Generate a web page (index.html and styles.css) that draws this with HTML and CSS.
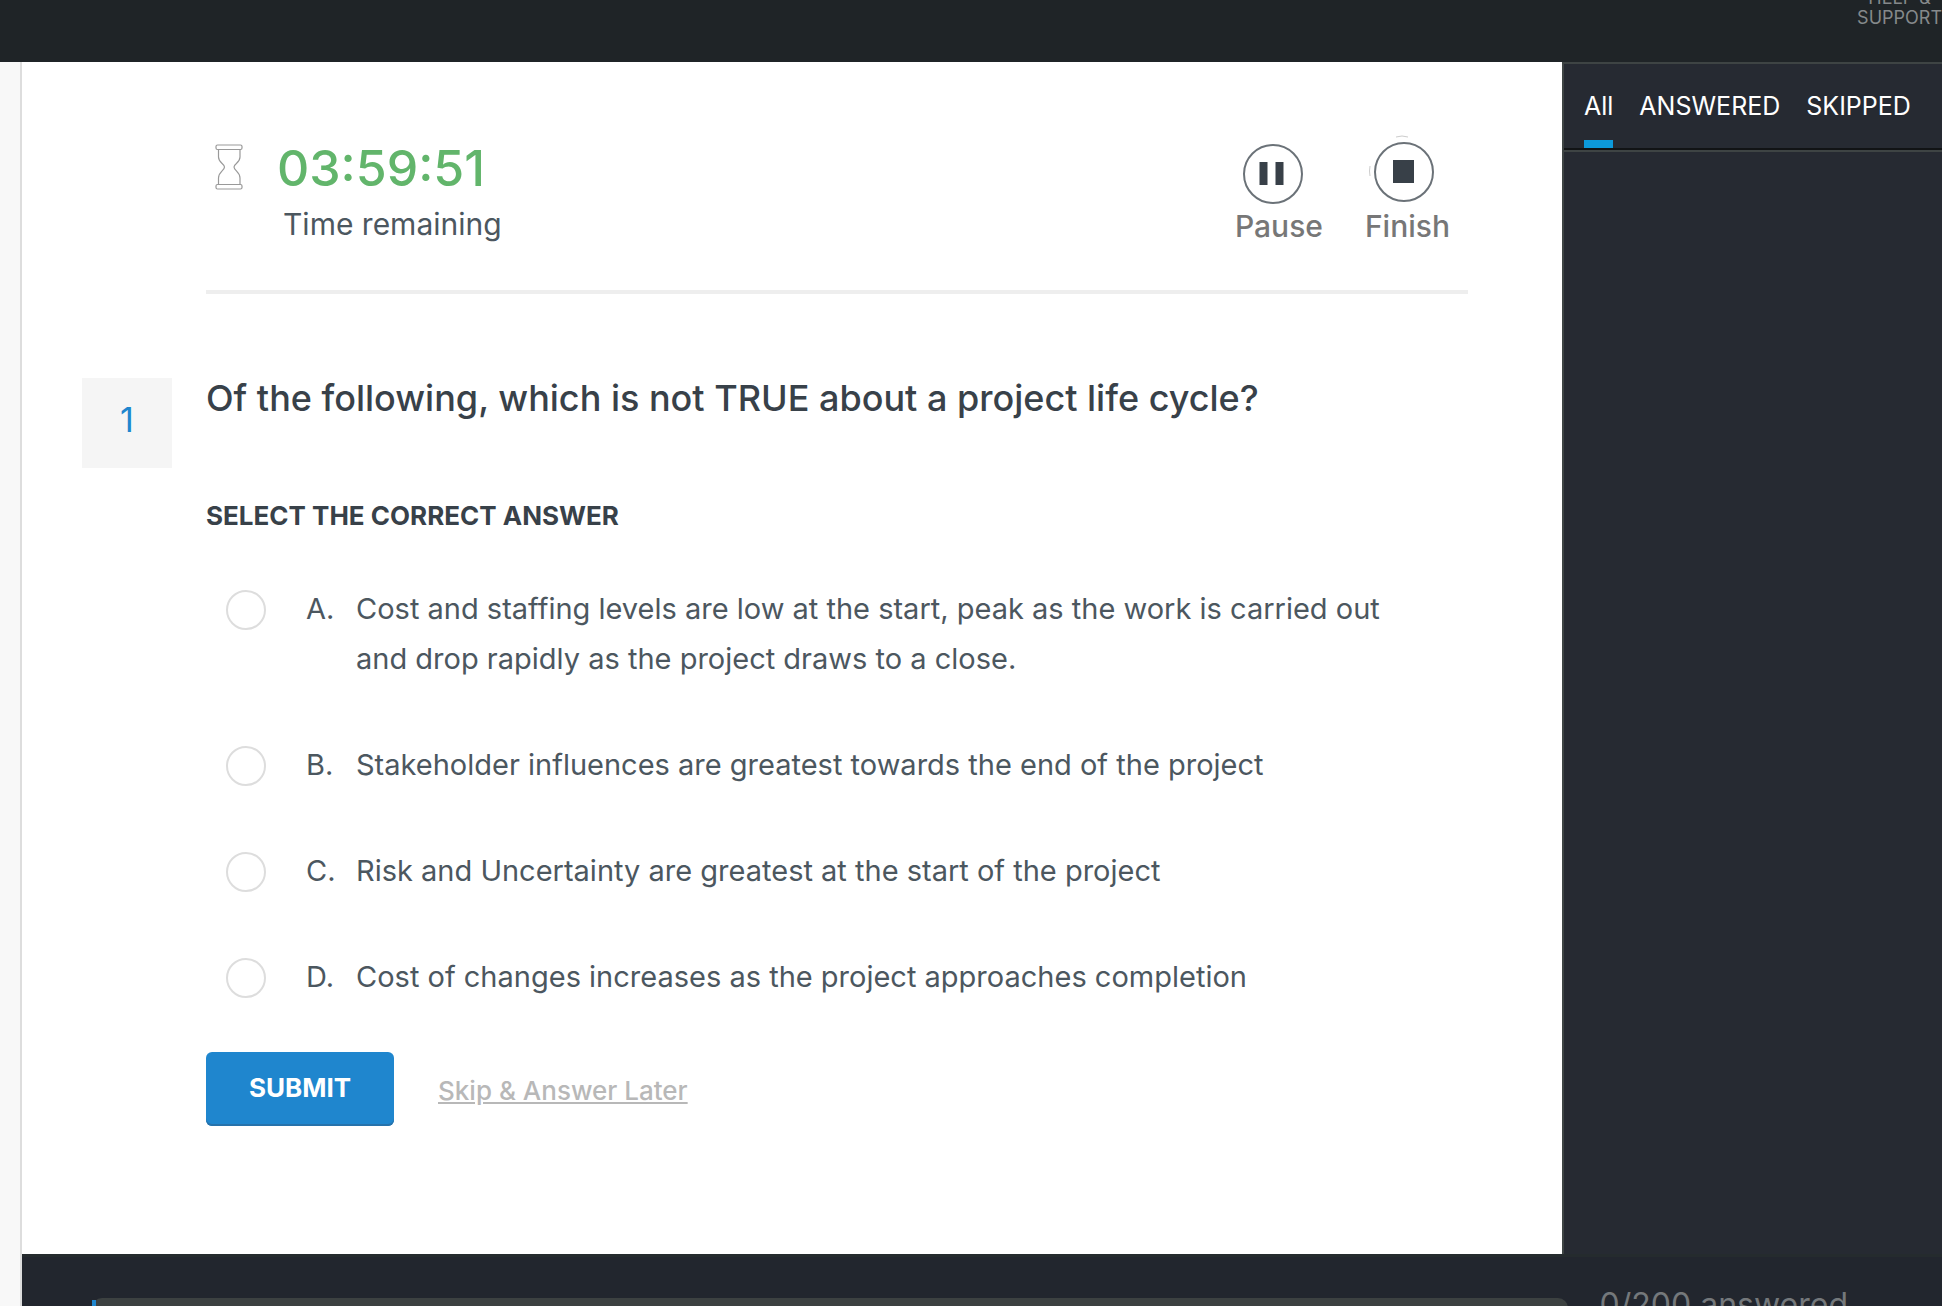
FILE: index.html
```html
<!DOCTYPE html>
<html lang="en">
<head>
    <meta charset="UTF-8">
    <meta name="viewport" content="width=device-width, initial-scale=1.0">
    <title>Practice Exam</title>
    <link rel="stylesheet" href="styles.css">
</head>
<body>
    <header class="top-bar">
        <a href="#" class="help-link">HELP &amp;<br>SUPPORT</a>
    </header>

    <div class="page">
        <div class="gutter"></div>

        <div class="exam">
            <div class="exam-body">
                <main class="question-panel">
                    <div class="exam-header">
                        <div class="timer">
                            <svg class="hourglass" width="28" height="46" viewBox="0 0 28 46" fill="none" stroke="#999" stroke-width="1.2">
                                <rect x="1" y="1" width="26" height="4.5" rx="1.5"/>
                                <rect x="1" y="40.5" width="26" height="4.5" rx="1.5"/>
                                <path d="M3.5 5.5V13C3.5 19 9.5 19.5 9.5 23C9.5 26.5 3.5 28 3.5 34V40.5M25 5.5V13C25 19 19 19.5 19 23C19 26.5 25 28 25 34V40.5"/>
                            </svg>
                            <div>
                                <div class="time">03:59:51</div>
                                <div class="time-label">Time remaining</div>
                            </div>
                        </div>
                        <div class="exam-controls">
                            <button type="button" class="control">
                                <svg width="76" height="76" viewBox="0 0 76 76">
                                    <circle cx="32" cy="40" r="29" fill="none" stroke="#6b7278" stroke-width="2"/>
                                    <path d="M18.5 28h8v23h-8zM34.5 28h8v23h-8z" fill="#384048"/>
                                </svg>
                                Pause
                            </button>
                            <button type="button" class="control">
                                <svg width="76" height="76" viewBox="0 0 76 76">
                                    <circle cx="35" cy="38" r="29" fill="none" stroke="#6b7278" stroke-width="2"/>
                                    <path d="M24 26h21v23H24z" fill="#384048"/>
                                    <path d="M27 3Q33 1 39 3M1 32Q0 37 1 42" fill="none" stroke="#ccc"/>
                                </svg>
                                Finish
                            </button>
                        </div>
                    </div>

                    <form class="question">
                        <div class="question-number">1</div>
                        <div class="question-content">
                            <h1 class="question-text">Of the following, which is not TRUE about a project life cycle?</h1>
                            <h2 class="instruction">SELECT THE CORRECT ANSWER</h2>
                            <div class="answers">
                                <label class="answer">
                                    <input type="radio" name="answer" value="A">
                                    <span class="letter">A.</span>
                                    <span>Cost and staffing levels are low at the start, peak as the work is carried out and drop rapidly as the project draws to a close.</span>
                                </label>
                                <label class="answer">
                                    <input type="radio" name="answer" value="B">
                                    <span class="letter">B.</span>
                                    <span>Stakeholder influences are greatest towards the end of the project</span>
                                </label>
                                <label class="answer">
                                    <input type="radio" name="answer" value="C">
                                    <span class="letter">C.</span>
                                    <span>Risk and Uncertainty are greatest at the start of the project</span>
                                </label>
                                <label class="answer">
                                    <input type="radio" name="answer" value="D">
                                    <span class="letter">D.</span>
                                    <span>Cost of changes increases as the project approaches completion</span>
                                </label>
                            </div>
                            <div class="actions">
                                <button type="submit" class="submit">SUBMIT</button>
                                <a href="#" class="skip">Skip &amp; Answer Later</a>
                            </div>
                        </div>
                    </form>
                </main>

                <aside class="sidebar">
                    <nav class="tabs">
                        <a href="#" class="tab active">All</a>
                        <a href="#" class="tab">ANSWERED</a>
                        <a href="#" class="tab">SKIPPED</a>
                    </nav>
                </aside>
            </div>

            <footer class="status-bar">
                <div class="progress"><div class="progress-fill"></div></div>
                <div class="progress-text">0/200 answered</div>
            </footer>
        </div>
    </div>
</body>
</html>
```

FILE: styles.css
```css
* {
    box-sizing: border-box;
}
body {
    display: flex;
    flex-direction: column;
    height: 100vh;
    margin: 0;
    overflow: hidden;
    background-color: #fff;
    color: #4c575f;
    font-family: Inter, "Noto Sans", sans-serif;
    font-size: 29px;
}
button {
    font-family: inherit;
    cursor: pointer;
}

/* top bar */
.top-bar {
    display: flex;
    justify-content: flex-end;
    align-items: flex-end;
    flex: none;
    height: 62px;
    padding-bottom: 34px;
    overflow: hidden;
    background-color: #1f2427;
}
.help-link {
    color: #85898b;
    font-size: 18px;
    line-height: 20px;
    text-align: center;
    text-decoration: none;
}

/* page columns */
.page {
    display: flex;
    flex: 1;
    min-height: 0;
}
.gutter {
    flex: none;
    width: 22px;
    background-color: #f8f8f8;
    border-right: 2px solid #ddd;
}
.exam {
    display: flex;
    flex-direction: column;
    flex: 1;
}
.exam-body {
    display: flex;
    flex: 1;
    min-height: 0;
}
.question-panel {
    flex: 1;
    padding: 72px 94px 0 60px;
}

/* timer and controls */
.exam-header {
    display: flex;
    justify-content: space-between;
    height: 160px;
    margin-left: 124px;
    border-bottom: 4px solid #eee;
}
.timer {
    display: flex;
    gap: 34px;
    padding: 10px 0 0 9px;
}
.time {
    color: #62b56b;
    font-size: 50px;
    font-weight: 500;
    line-height: 48px;
}
.time-label {
    padding: 2px 0 0 6px;
    font-size: 30px;
    line-height: 60px;
}
.exam-controls {
    display: flex;
    gap: 42px;
    padding-right: 18px;
}
.control {
    display: flex;
    flex-direction: column;
    align-items: center;
    padding: 0;
    border: none;
    background: none;
    color: #777;
    font-size: 30px;
    font-weight: 500;
    line-height: 32px;
}

/* question */
.question {
    display: flex;
    gap: 34px;
    padding-top: 84px;
}
.question-number {
    flex: none;
    width: 90px;
    height: 90px;
    background-color: #f5f5f5;
    color: #1f86ce;
    font-size: 34px;
    line-height: 84px;
    text-align: center;
}
.question-content {
    flex: 1;
}
.question-text {
    margin: 0;
    color: #384149;
    font-size: 36px;
    font-weight: 500;
    line-height: 40px;
}
.instruction {
    margin: 80px 0 50px;
    color: #384149;
    font-size: 26px;
    font-weight: 700;
    line-height: 36px;
}
.answers {
    display: flex;
    flex-direction: column;
    gap: 56px;
}
.answer {
    display: flex;
    padding: 0 60px 0 20px;
    line-height: 50px;
    cursor: pointer;
}
.answer input {
    appearance: none;
    flex: none;
    width: 40px;
    height: 40px;
    margin: 6px 40px 0 0;
    border: 2px solid #ddd;
    border-radius: 50%;
    background-color: #fff;
}
.answer input:checked {
    border-color: #1f86ce;
    background-color: #1f86ce;
}
.letter {
    flex: none;
    width: 50px;
}
.actions {
    display: flex;
    align-items: center;
    gap: 44px;
    margin-top: 50px;
}
.submit {
    width: 188px;
    height: 74px;
    padding: 0 0 4px;
    border: none;
    border-radius: 6px;
    background-color: #1f86ce;
    box-shadow: inset 0 -2px #2672ab;
    color: #fff;
    font-size: 26px;
    font-weight: 700;
}
.skip {
    padding-top: 2px;
    color: #b8b8b8;
    font-size: 26px;
    font-weight: 500;
}

/* sidebar */
.sidebar {
    flex: none;
    width: 380px;
    border-top: 2px solid #3e4444;
    border-left: 2px solid #3e4444;
    background-color: #262a32;
}
.tabs {
    display: flex;
    gap: 26px;
    height: 88px;
    padding-left: 20px;
    border-bottom: 2px solid #3e4444;
    box-shadow: inset 0 -2px #111315;
}
.tab {
    height: 84px;
    color: #fff;
    font-size: 25px;
    line-height: 84px;
    text-decoration: none;
}
.tab.active {
    border-bottom: 8px solid #0c99da;
}

/* bottom bar */
.status-bar {
    display: flex;
    flex: none;
    gap: 32px;
    height: 52px;
    padding: 41px 94px 0 70px;
    overflow: hidden;
    border-top: 3px solid #252b2e;
    background-color: #22262e;
}
.progress {
    flex: 1;
    height: 20px;
    padding-top: 2px;
    border-radius: 10px;
    background-color: #3c4141;
}
.progress-fill {
    width: 4px;
    height: 18px;
    background-color: #1f86ce;
}
.progress-text {
    margin-top: -13px;
    color: #74787b;
    font-size: 32px;
    line-height: 40px;
}
```
